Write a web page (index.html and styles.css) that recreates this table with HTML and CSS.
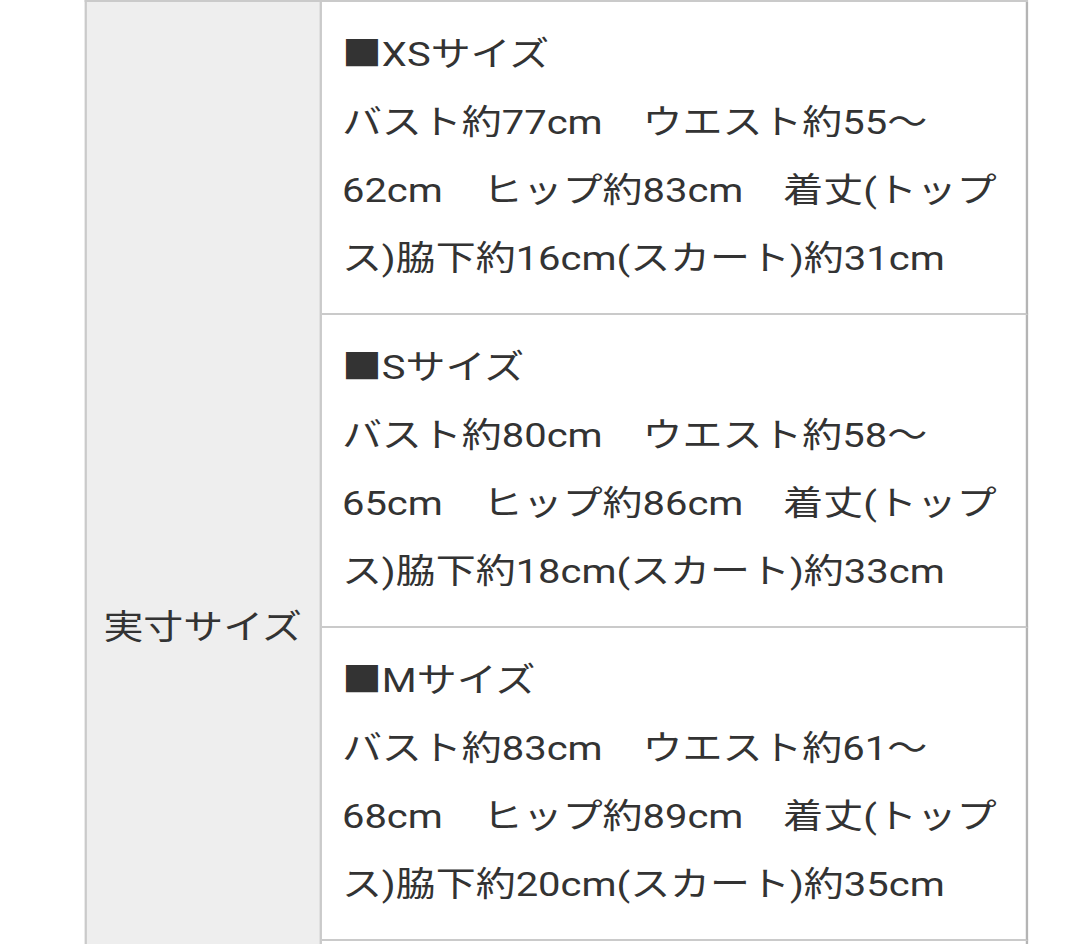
FILE: index.html
```html
<!DOCTYPE html>
<html lang="ja">
<head>
<meta charset="utf-8">
<title>実寸サイズ</title>
<link rel="stylesheet" href="styles.css">
</head>
<body>
<div class="page">
  <table class="spec">
    <tr>
      <th class="spec-head" rowspan="4">実寸サイズ</th>
      <td class="spec-cell">■XSサイズ<br>バスト約77cm　ウエスト約55～62cm　ヒップ約83cm　着丈(トップス)脇下約16cm(スカート)約31cm</td>
    </tr>
    <tr>
      <td class="spec-cell">■Sサイズ<br>バスト約80cm　ウエスト約58～65cm　ヒップ約86cm　着丈(トップス)脇下約18cm(スカート)約33cm</td>
    </tr>
    <tr>
      <td class="spec-cell">■Mサイズ<br>バスト約83cm　ウエスト約61～68cm　ヒップ約89cm　着丈(トップス)脇下約20cm(スカート)約35cm</td>
    </tr>
    <tr>
      <td class="spec-cell">■Lサイズ<br>バスト約86cm　ウエスト約64～71cm　ヒップ約92cm　着丈(トップス)脇下約22cm(スカート)約37cm</td>
    </tr>
  </table>
</div>
</body>
</html>
```

FILE: styles.css
```css
html, body {
  margin: 0;
  padding: 0;
  background: #ffffff;
  overflow: hidden;
}

.page {
  width: max-content;
  transform: scaleX(1.175);
  transform-origin: 0 0;
  padding-left: 71.5px;
  font-family: Roboto, "Noto Sans CJK JP", sans-serif;
  font-size: 34px;
  line-height: 68px;
  color: #333333;
}

.spec {
  border-collapse: separate;
  border-spacing: 0;
  table-layout: fixed;
  border-top: 2px solid #cacaca;
  border-left: 2px solid #cacaca;
}

.spec-head {
  width: 198px;
  padding: 0;
  background: #eeeeee;
  font-weight: normal;
  text-align: center;
  vertical-align: middle;
  border-right: 2px solid #cacaca;
  border-bottom: 2px solid #cacaca;
}

.spec-cell {
  width: 570px;
  padding: 18px 12px 21px 17.5px;
  text-align: left;
  vertical-align: top;
  border-right: 2px solid #b4b4b4;
  border-bottom: 2px solid #cacaca;
}
```
